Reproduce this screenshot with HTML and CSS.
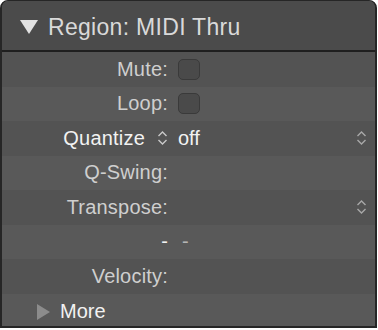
FILE: index.html
```html
<!DOCTYPE html>
<html lang="en">
<head>
<meta charset="UTF-8">
<title>Region Inspector</title>
<link rel="stylesheet" href="styles.css">
</head>
<body>

<div class="panel">
    <div class="header">
        <span class="disclosure-down"></span>
        <span class="title">Region: MIDI Thru</span>
    </div>

    <div class="row">
        <div class="label">Mute:</div>
        <div class="value"><span class="checkbox"></span></div>
    </div>
    <div class="row alt">
        <div class="label">Loop:</div>
        <div class="value"><span class="checkbox"></span></div>
    </div>
    <div class="row">
        <div class="label bright">Quantize
            <svg class="updown" width="11" height="16" viewBox="0 0 11 16"><path d="M1.5 6 L5.5 2 L9.5 6 M1.5 10 L5.5 14 L9.5 10" /></svg>
        </div>
        <div class="value spread">
            <span class="bright">off</span>
            <svg class="updown dim" width="11" height="16" viewBox="0 0 11 16"><path d="M1.5 6 L5.5 2 L9.5 6 M1.5 10 L5.5 14 L9.5 10" /></svg>
        </div>
    </div>
    <div class="row alt">
        <div class="label">Q-Swing:</div>
        <div class="value"></div>
    </div>
    <div class="row">
        <div class="label">Transpose:</div>
        <div class="value spread">
            <span></span>
            <svg class="updown dim" width="11" height="16" viewBox="0 0 11 16"><path d="M1.5 6 L5.5 2 L9.5 6 M1.5 10 L5.5 14 L9.5 10" /></svg>
        </div>
    </div>
    <div class="row alt">
        <div class="label bright">-</div>
        <div class="value dash">-</div>
    </div>
    <div class="row">
        <div class="label">Velocity:</div>
        <div class="value"></div>
    </div>
    <div class="row alt more">
        <span class="disclosure-right"></span>
        <span class="bright">More</span>
    </div>
</div>

</body>
</html>
```

FILE: styles.css
```css
* {
    box-sizing: border-box;
}

body {
    margin: 0;
    background-color: #ffffff;
    font-family: "Liberation Sans", Arial, sans-serif;
}

.panel {
    width: 377px;
    height: 328px;
    background-color: #595959;
    border: 2px solid #262626;
    border-top-width: 1px;
    border-radius: 8px 8px 0 0;
    overflow: hidden;
}

.header {
    display: flex;
    align-items: center;
    height: 51px;
    padding-left: 18px;
    padding-top: 3px;
    background-color: #4b4b4b;
    border-bottom: 2px solid #1f1f1f;
}

.disclosure-down {
    width: 0;
    height: 0;
    border-left: 9px solid transparent;
    border-right: 9px solid transparent;
    border-top: 14px solid #e2e2e2;
    margin-right: 10px;
}

.title {
    font-size: 23px;
    color: #d9d9d9;
    letter-spacing: 0.3px;
}

.row {
    display: grid;
    grid-template-columns: 166px 1fr;
    column-gap: 10px;
    align-items: center;
    height: 34.5px;
    font-size: 20px;
    color: #cfcfcf;
    background-color: #535353;
}

.row.alt {
    background-color: #595959;
}

.label {
    display: flex;
    justify-content: flex-end;
    align-items: center;
    text-align: right;
    letter-spacing: 0.2px;
}

.bright {
    color: #f2f2f2;
}

.value {
    display: flex;
    align-items: center;
    padding-right: 8px;
}

.spread {
    justify-content: space-between;
}

.dash {
    padding-left: 4px;
    color: #b5b5b5;
}

.checkbox {
    display: block;
    width: 22px;
    height: 21px;
    border-radius: 5px;
    background-color: #4a4a4a;
    border: 1px solid #3a3a3a;
}

.updown {
    fill: none;
    stroke: #c9c9c9;
    stroke-width: 1.4;
}

.label .updown {
    margin-left: 12px;
}

.updown.dim {
    stroke: #a8a8a8;
}

.more {
    display: flex;
    column-gap: 0;
    height: 36px;
    padding-left: 35px;
}

.disclosure-right {
    width: 0;
    height: 0;
    border-top: 8px solid transparent;
    border-bottom: 8px solid transparent;
    border-left: 13px solid #8c8c8c;
    margin-right: 10px;
}
```
